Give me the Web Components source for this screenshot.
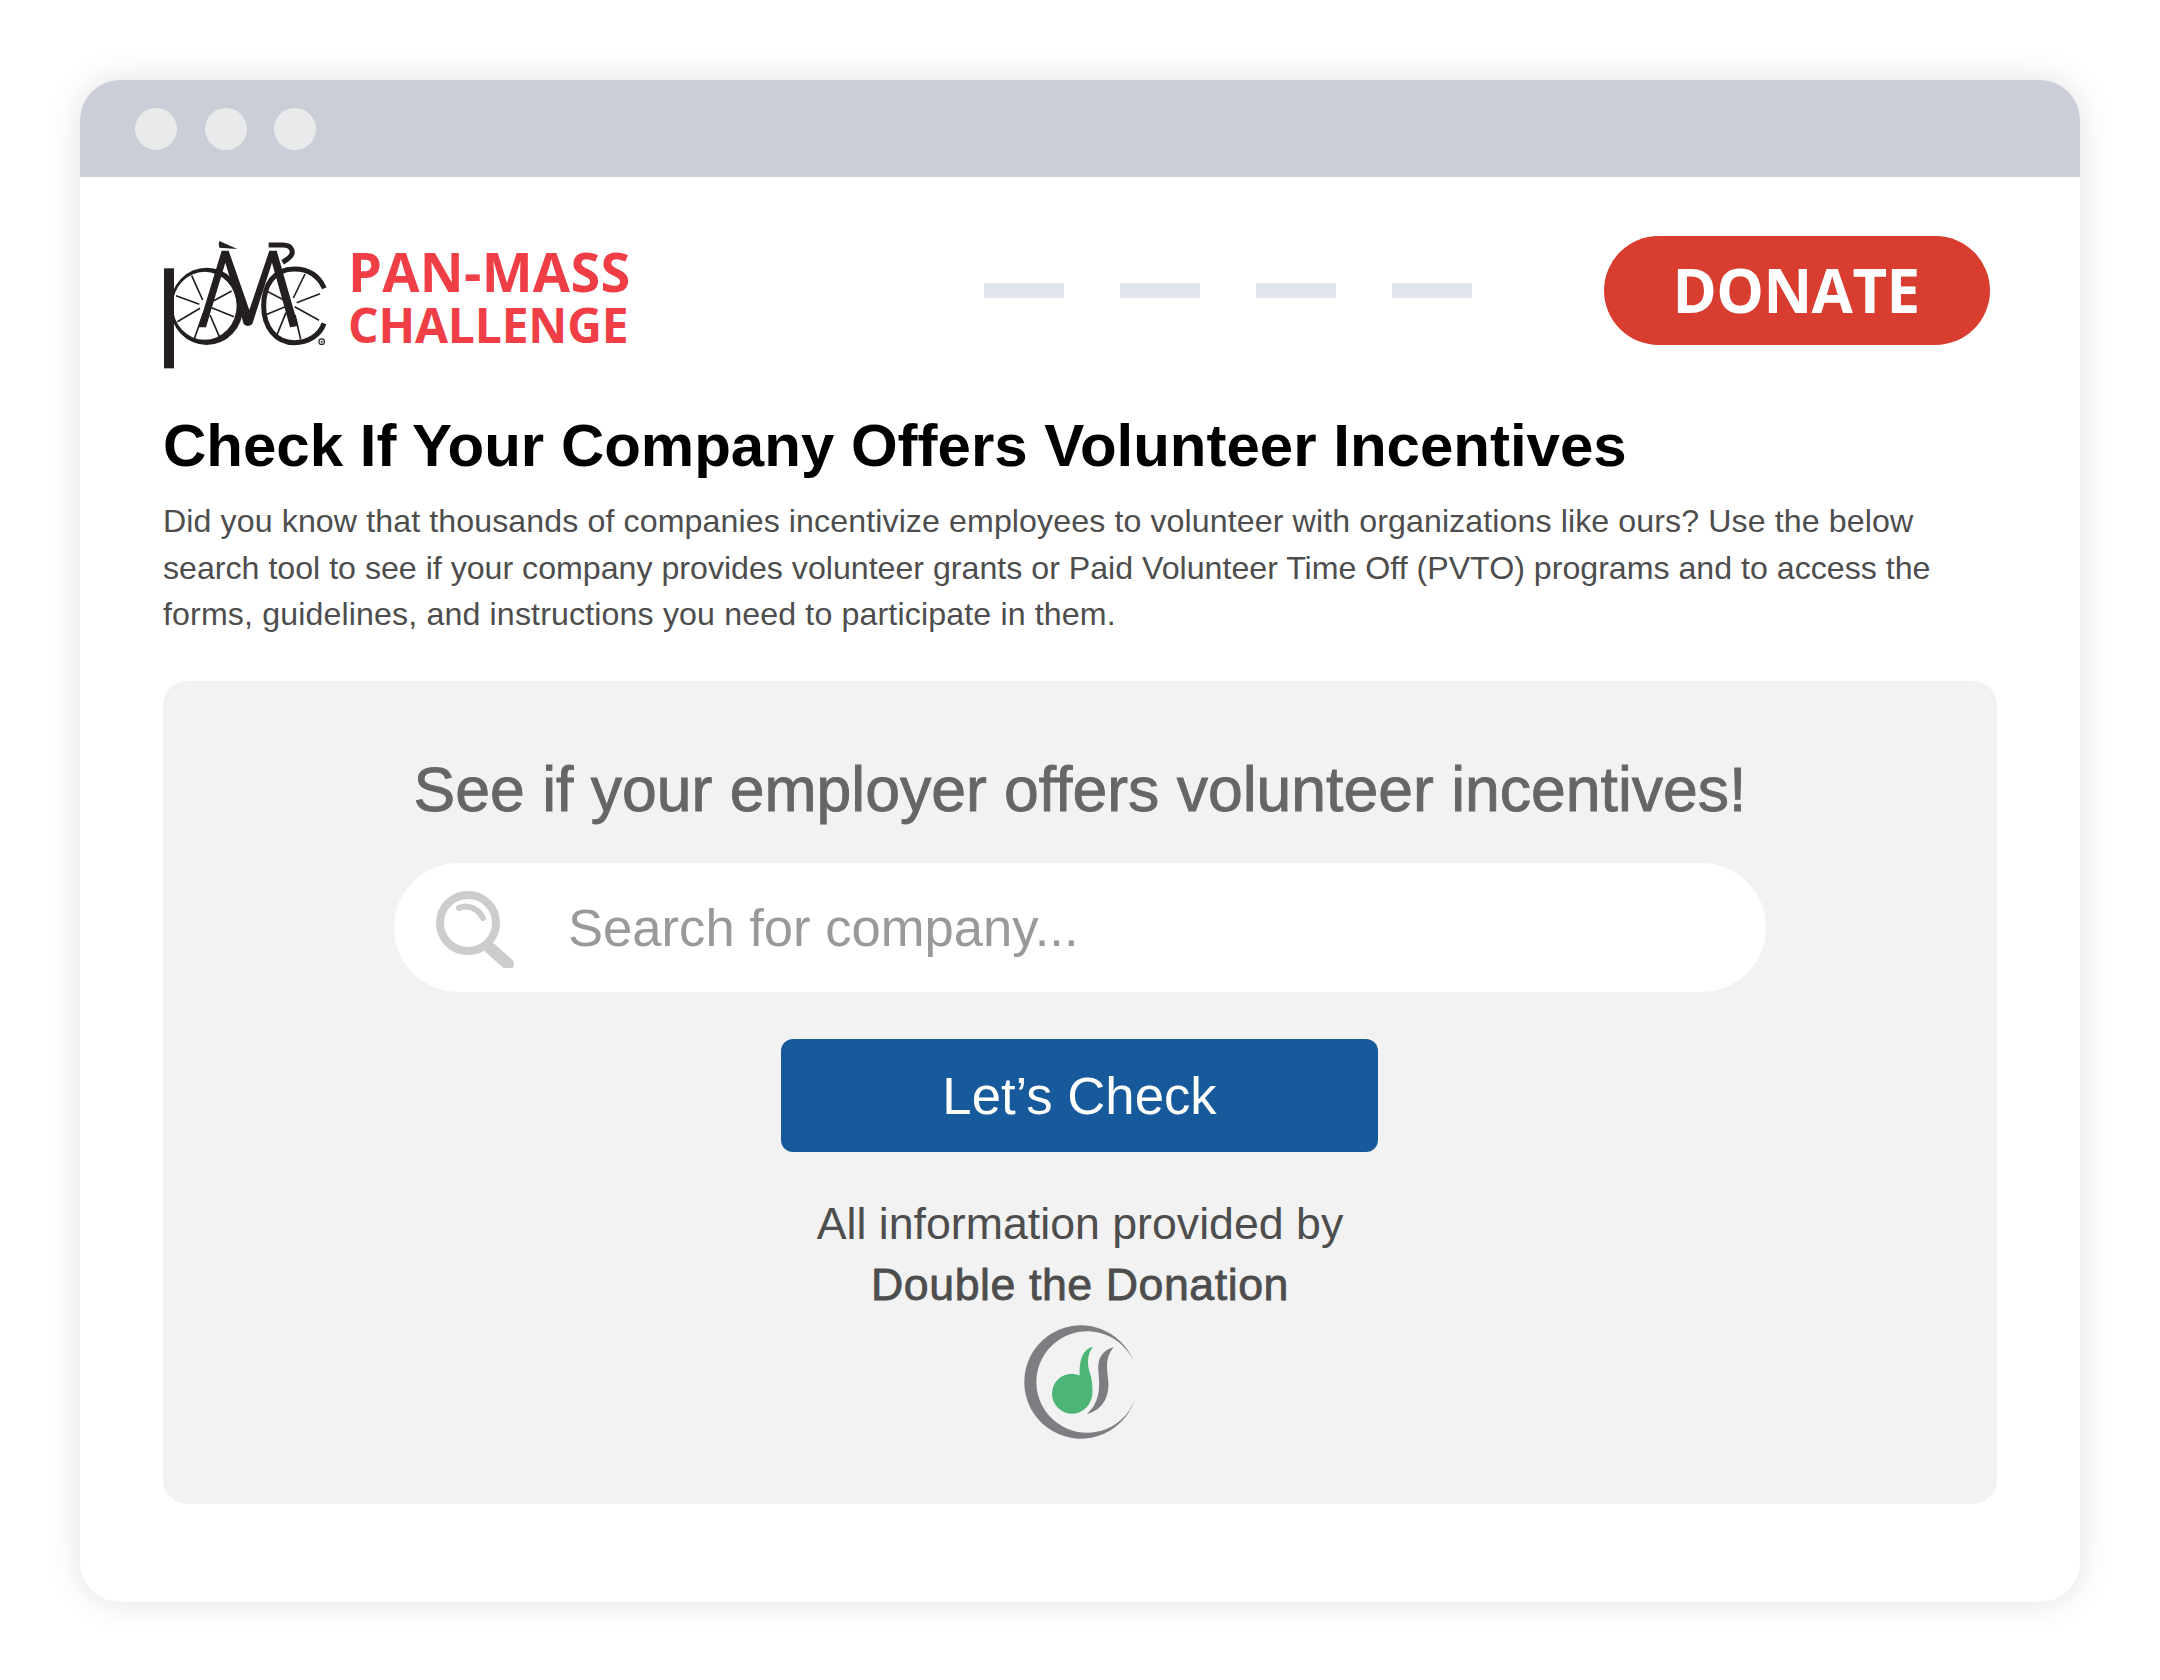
<!DOCTYPE html>
<html lang="en">
<head>
<meta charset="utf-8">
<title>Volunteer Incentives</title>
<style>
  html, body { margin: 0; background: #fff; }
  body { font-family: "Liberation Sans", Arial, sans-serif; }
  .line-a { letter-spacing: 0.1px; }
  .line-c { letter-spacing: 0.14px; }
</style>
</head>
<body>
<browser-frame>
  <site-header></site-header>
  <page-intro heading="Check If Your Company Offers Volunteer Incentives">
    <span class="line-a">Did you know that thousands of companies incentivize employees to volunteer with organizations like ours? Use the below</span><br>
    search tool to see if your company provides volunteer grants or Paid Volunteer Time Off (PVTO) programs and to access the<br>
    <span class="line-c">forms, guidelines, and instructions you need to participate in them.</span>
  </page-intro>
  <search-panel></search-panel>
</browser-frame>

<script>
/**
 * The window chrome around the page.
 */
customElements.define('browser-frame',
  class extends HTMLElement {
    constructor () {
      super()
      this.attachShadow({ mode: 'open' }).innerHTML = `
        <style>
          :host {
            display: block;
            width: 2000px;
            height: 1522px;
            margin: 80px 80px 78px;
            background: #fff;
            border-radius: 40px;
            box-shadow: 0 0 34px rgba(0, 0, 0, 0.12);
            overflow: hidden;
          }
          .bar {
            height: 97px;
            background: #cbced6;
            display: flex;
            align-items: center;
            gap: 27.5px;
            padding-left: 55px;
          }
          .bar span {
            width: 42px;
            height: 42px;
            border-radius: 50%;
            background: #e9eaec;
          }
          .content { padding: 59px 82px 0 83px; }
        </style>
        <div class="bar"><span></span><span></span><span></span></div>
        <div class="content"><slot></slot></div>
      `
    }
  }
)

/**
 * Logo, placeholder nav and donate button.
 */
customElements.define('site-header',
  class extends HTMLElement {
    constructor () {
      super()
      this.attachShadow({ mode: 'open' }).innerHTML = `
        <style>
          :host {
            display: flex;
            align-items: flex-start;
            height: 109px;
          }
          .mark { display: block; margin: 2px 0 0 1px; flex: none; }
          .name {
            margin: 8px 0 0 19px;
            width: 280px;
            flex: none;
            font-family: "Open Sans", sans-serif;
            font-weight: 700;
            color: #ef3e46;
            white-space: nowrap;
          }
          .name div { text-align: right; }
          .pan { font-size: 54px; line-height: 55px; letter-spacing: 0.3px; }
          .chal { font-size: 48px; line-height: 52px; letter-spacing: -0.2px; }
          nav {
            display: flex;
            gap: 56px;
            margin: 47px 0 0 356px;
          }
          nav span { width: 80px; height: 15px; background: #e1e5ec; }
          .donate {
            margin-left: auto;
            margin-right: 8px;
            width: 386px;
            height: 109px;
            box-sizing: border-box;
            padding: 0 2px 2px 0;
            border-radius: 55px;
            background: #d93d2f;
            color: #fff;
            display: flex;
            align-items: center;
            justify-content: center;
            font-family: "Open Sans", sans-serif;
            font-weight: 700;
            font-size: 60px;
            letter-spacing: -0.6px;
          }
        </style>
        <svg class="mark" width="165" height="132" viewBox="72 54 495 396" aria-hidden="true">
          <g fill="#231f20">
            <path fill-rule="evenodd" d="M90 259a110 116 0 1 0 220 0a110 116 0 1 0 -220 0ZM98 257.500a96 102 0 1 1 192 0a96 102 0 1 1 -192 0Z"/>
            <rect x="72" y="145" width="30" height="300"/>
          </g>
          <g fill="none" stroke="#231f20" stroke-linecap="butt">
            <path d="M553 205C535 165 505 147 463 147C400 147 371 197 371 258C371 322 408 368 463 368C505 368 540 345 552 310" stroke-width="15"/>
            <path d="M155 167L188 240M108 227L178 253M275 213L220 243M112 305L180 265M215 263L282 290M210 285L238 350M190 280L163 356" stroke-width="5"/>
            <path d="M495 162L460 234M540 221L470 248M375 211L436 242M370 287L436 260M464 260L537 301M438 278L410 347M465 285L482 358" stroke-width="5"/>
            <path d="M386 75H428C458 75 466 100 444 116L428 127" stroke-width="15"/>
          </g>
          <g fill="#231f20">
            <path d="M175 322L245 92L266 92L328 270L388 92L410 92L475 318L450 322L396 128L337 312Q323 324 311 312L256 128L198 322Z"/>
            <path d="M238 63Q234 72 238 83L292 87Z"/>
            <circle cx="545" cy="365" r="10"/>
          </g>
          <circle cx="545" cy="365" r="6.500" fill="#fff"/>
          <circle cx="545" cy="365" r="3" fill="#231f20"/>
        </svg>
        <div class="name">
          <div class="pan">PAN-MASS</div>
          <div class="chal">CHALLENGE</div>
        </div>
        <nav><span></span><span></span><span></span><span></span></nav>
        <div class="donate">DONATE</div>
      `
    }
  }
)

/**
 * Page heading and intro copy.
 */
customElements.define('page-intro',
  class extends HTMLElement {
    constructor () {
      super()
      this.attachShadow({ mode: 'open' }).innerHTML = `
        <style>
          :host { display: block; margin-top: 65px; }
          h1 {
            margin: 0;
            font-size: 60px;
            line-height: 72px;
            font-weight: 700;
            color: #000;
          }
          p {
            margin: 16px 0 0;
            font-size: 32.15px;
            line-height: 46.7px;
            color: #4d4d4d;
            white-space: nowrap;
          }
        </style>
        <h1></h1>
        <p><slot></slot></p>
      `
      this.shadowRoot.querySelector('h1').textContent = this.getAttribute('heading')
    }
  }
)

/**
 * Search field with the magnifier.
 */
customElements.define('search-box',
  class extends HTMLElement {
    constructor () {
      super()
      this.attachShadow({ mode: 'open' }).innerHTML = `
        <style>
          :host {
            display: flex;
            align-items: center;
            width: 1372px;
            height: 129px;
            border-radius: 65px;
            background: #fff;
            box-sizing: border-box;
            padding-left: 40px;
          }
          svg { display: block; flex: none; }
          span {
            margin-left: 54px;
            font-size: 52.6px;
            color: #999;
          }
        </style>
        <svg width="80" height="80" viewBox="0 0 80 80" aria-hidden="true">
          <g fill="none" stroke="#ccc" stroke-linecap="round">
            <circle cx="34" cy="35" r="28" stroke-width="8"/>
            <path d="M56 60L74 76" stroke-width="12"/>
            <path d="M25 20C33 16 44 20 49 30" stroke-width="6"/>
          </g>
        </svg>
        <span>Search for company...</span>
      `
    }
  }
)

/**
 * Double the Donation mark.
 */
customElements.define('dtd-logo',
  class extends HTMLElement {
    constructor () {
      super()
      this.attachShadow({ mode: 'open' }).innerHTML = `
        <style>
          :host { display: block; width: 114px; height: 114px; }
          svg { display: block; }
        </style>
        <svg width="114" height="114" viewBox="133 71 342 342" aria-hidden="true">
          <path fill="#7e7e82" d="M465 188A170 170 0 1 0 465 296A152.400 152.400 0 1 1 465 188Z"/>
          <circle cx="277" cy="277" r="60" fill="#4db576"/>
          <path fill="#4db576" d="M340 136C315 142 298 165 300 222L337 290C342 250 334 225 328 205C322 180 325 155 340 136Z"/>
          <path fill="#7e7e82" d="M402 138C370 146 352 170 356 210C360 250 365 300 322 338C365 328 390 290 386 240C382 200 375 170 402 138Z"/>
        </svg>
      `
    }
  }
)

/**
 * The grey employer search panel.
 */
customElements.define('search-panel',
  class extends HTMLElement {
    constructor () {
      super()
      this.attachShadow({ mode: 'open' }).innerHTML = `
        <style>
          :host {
            display: flex;
            flex-direction: column;
            align-items: center;
            margin-top: 43px;
            width: 1834px;
            height: 823px;
            box-sizing: border-box;
            padding-top: 71px;
            background: #f2f2f2;
            border-radius: 24px;
          }
          h2 {
            margin: 0 0 36px;
            font-size: 62.5px;
            line-height: 75px;
            font-weight: 400;
            color: #666;
            -webkit-text-stroke: 0.9px #666;
          }
          .check {
            margin: 47px 1px 0 0;
            width: 597px;
            height: 113px;
            border-radius: 12px;
            background: #165a9b;
            color: #fff;
            font-size: 52.7px;
            display: flex;
            align-items: center;
            justify-content: center;
          }
          .by {
            margin-top: 41px;
            font-size: 44.7px;
            line-height: 61px;
            color: #4d4d4d;
            text-align: center;
          }
          .by b {
            display: block;
            font-weight: 400;
            letter-spacing: 0.55px;
            -webkit-text-stroke: 0.8px #4d4d4d;
          }
          dtd-logo { margin: 10px 0 0 2px; }
        </style>
        <h2>See if your employer offers volunteer incentives!</h2>
        <search-box></search-box>
        <div class="check">Let’s Check</div>
        <div class="by">All information provided by<b>Double the Donation</b></div>
        <dtd-logo></dtd-logo>
      `
    }
  }
)
</script>
</body>
</html>
